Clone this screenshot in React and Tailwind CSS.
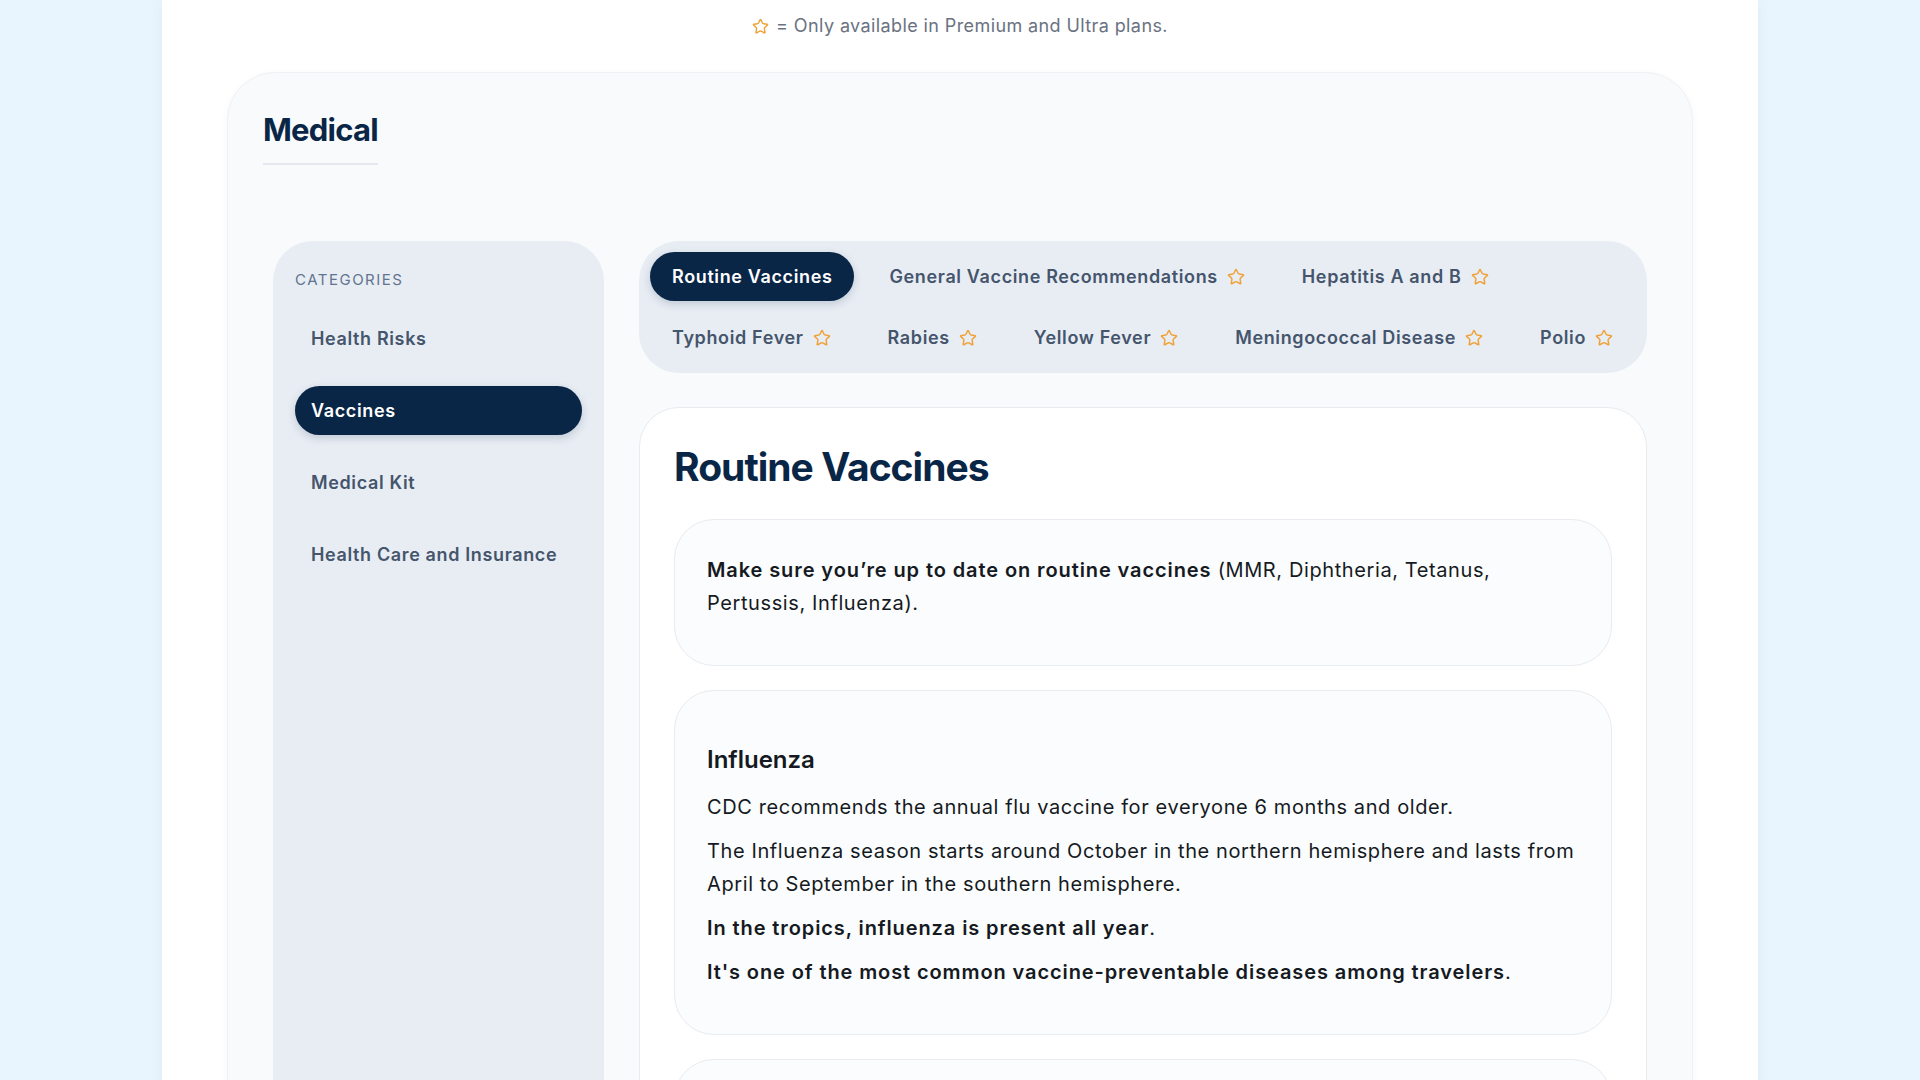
import React, { useState } from 'react';
import { Star } from 'lucide-react';

const categories = ['Health Risks', 'Vaccines', 'Medical Kit', 'Health Care and Insurance'];

const tabs = [
  { label: 'Routine Vaccines', premium: false },
  { label: 'General Vaccine Recommendations', premium: true },
  { label: 'Hepatitis A and B', premium: true },
  { label: 'Typhoid Fever', premium: true },
  { label: 'Rabies', premium: true },
  { label: 'Yellow Fever', premium: true },
  { label: 'Meningococcal Disease', premium: true },
  { label: 'Polio', premium: true },
];

function PremiumStar({ size = 18 }) {
  return <Star size={size} strokeWidth={2} className="text-[#f0a23a] shrink-0" />;
}

function InfoBox({ children }) {
  return (
    <div className="rounded-[40px] border border-[#e8ebef] bg-[#fbfcfd] px-8 pt-[34px] pb-[34px] text-[20px] leading-[33px] tracking-[0.03em] text-[#151a22]">
      {children}
    </div>
  );
}

function B({ children }) {
  return <strong className="font-semibold tracking-[0.045em]">{children}</strong>;
}

export default function App() {
  const [category, setCategory] = useState('Vaccines');
  const [tab, setTab] = useState('Routine Vaccines');

  return (
    <div className="min-h-screen bg-[#e9f5fe] font-['Inter',sans-serif]">
      <div className="mx-auto w-[1596px] min-h-screen bg-white px-[65px] pt-[14px] shadow-[0_0_14px_rgba(15,40,80,0.06)]">
        {/* premium note */}
        <div className="flex items-center justify-center gap-[7px] text-[18px] leading-6 tracking-[0.022em] text-gray-500">
          <PremiumStar size={17} />
          <span>= Only available in Premium and Ultra plans.</span>
        </div>

        <div className="mt-[34px] rounded-t-[48px] border border-[#eef1f5] bg-[#f8fafc] px-[35px] pt-[37px] shadow-[0_2px_10px_rgba(15,40,80,0.03)]">
          <h1 className="inline-block border-b-2 border-[#e4e8ee] pb-[13px] text-[31px] font-bold leading-[40px] tracking-tight text-[#0a2647]">
            Medical
          </h1>

          <div className="mt-[76px] flex items-stretch gap-[35px] px-[10px]">
            {/* sidebar */}
            <aside className="w-[331px] shrink-0 rounded-t-[40px] bg-[#e8edf4] px-[22px] pt-[29px]">
              <div className="text-[15px] uppercase leading-5 tracking-[0.1em] text-slate-500">Categories</div>
              <nav className="mt-[24px] flex flex-col gap-[23px]">
                {categories.map((c) => (
                  <button
                    key={c}
                    onClick={() => setCategory(c)}
                    className={
                      c === category
                        ? 'flex h-[49px] items-center rounded-full bg-[#0a2647] pl-4 text-left text-[18px] font-semibold tracking-[0.035em] text-white shadow-[0_3px_8px_rgba(10,38,71,0.18)]'
                        : 'flex h-[49px] items-center rounded-full pl-4 text-left text-[18px] font-semibold tracking-[0.035em] text-slate-600'
                    }
                  >
                    {c}
                  </button>
                ))}
              </nav>
            </aside>

            {/* main */}
            <main className="min-w-0 flex-1 pb-10">
              <div className="flex flex-wrap gap-x-[13px] gap-y-[12px] rounded-[40px] bg-[#e8edf4] p-[11px]">
                {tabs.map((t) => (
                  <button
                    key={t.label}
                    onClick={() => setTab(t.label)}
                    className={
                      t.label === tab
                        ? 'flex h-[49px] items-center gap-[9px] rounded-full bg-[#0a2647] px-[22px] text-[18px] font-semibold tracking-[0.035em] text-white shadow-[0_3px_8px_rgba(10,38,71,0.18)]'
                        : 'flex h-[49px] items-center gap-[9px] rounded-full px-[22px] text-[18px] font-semibold tracking-[0.035em] text-slate-600'
                    }
                  >
                    {t.label}
                    {t.premium && <PremiumStar />}
                  </button>
                ))}
              </div>

              <section className="mt-[34px] rounded-[40px] border border-[#e8ebef] bg-white px-[34px] pt-[35px] pb-[35px]">
                <h2 className="mb-[28px] text-[39px] font-bold leading-[48px] tracking-tight text-[#0a2647]">
                  Routine Vaccines
                </h2>

                <div className="flex flex-col gap-6">
                  <InfoBox>
                    <p className="mb-[11px]">
                      <B>Make sure you’re up to date on routine vaccines</B> (MMR, Diphtheria, Tetanus, Pertussis,
                      Influenza).
                    </p>
                  </InfoBox>

                  <InfoBox>
                    <h3 className="mt-[19px] mb-[15px] text-[24px] font-semibold leading-8 tracking-normal">Influenza</h3>
                    <p className="mb-[11px]">CDC recommends the annual flu vaccine for everyone 6 months and older.</p>
                    <p className="mb-[11px]">
                      The Influenza season starts around October in the northern hemisphere and lasts from April to
                      September in the southern hemisphere.
                    </p>
                    <p className="mb-[11px]">
                      <B>In the tropics, influenza is present all year</B>.
                    </p>
                    <p className="mb-[11px]">
                      <B>It's one of the most common vaccine-preventable diseases among travelers</B>.
                    </p>
                  </InfoBox>

                  <InfoBox>
                    <h3 className="mt-[19px] mb-[15px] text-[24px] font-semibold leading-8 tracking-normal">Measles</h3>
                    <p className="mb-[11px]">
                      Measles is highly contagious. Make sure you have received two doses of the MMR vaccine before
                      travelling.
                    </p>
                  </InfoBox>
                </div>
              </section>
            </main>
          </div>
        </div>
      </div>
    </div>
  );
}
